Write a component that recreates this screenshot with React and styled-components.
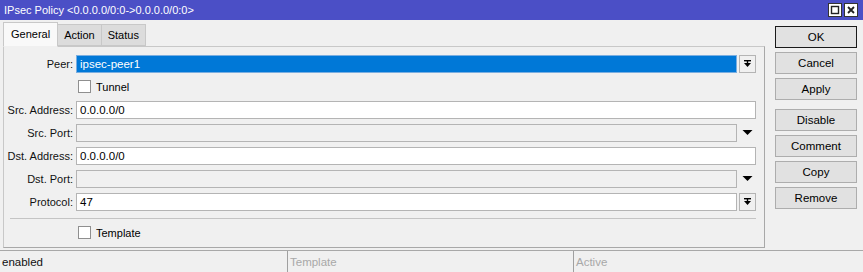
import * as React from 'react'
import styled, { createGlobalStyle } from 'styled-components'

const Global = createGlobalStyle`
    html, body {
        margin: 0;
        padding: 0;
        background: #f0f0f0;
    }
    body {
        font-family: "Liberation Sans", Arial, sans-serif;
        font-size: 11px;
        color: #000;
    }
`;

const Window = styled.div`
    width: 863px;
    height: 272px;
    display: flex;
    flex-direction: column;
    background: #f0f0f0;
    overflow: hidden;
`;
const TitleBar = styled.div`
    height: 20px;
    background: #4b4fc6;
    color: #fff;
    display: flex;
    align-items: center;
    padding: 0 4px;
    font-size: 11px;
`;
const TitleText = styled.div`
    flex: 1;
`;
const WinButtons = styled.div`
    display: flex;
    gap: 2px;
    margin-right: 1px;
`;
const WinButton = styled.div`
    width: 12px;
    height: 12px;
    background: #fff;
    border: 1px solid #333;
    display: flex;
    align-items: center;
    justify-content: center;
`;
const Main = styled.div`
    display: flex;
    height: 230px;
`;
const Left = styled.div`
    display: flex;
    flex-direction: column;
    padding: 2px 0 0 3px;
    width: 762px;
`;
const Tabs = styled.div`
    display: flex;
    align-items: flex-end;
    height: 24px;
    position: relative;
    z-index: 1;
`;
const Tab = styled.div`
    box-sizing: border-box;
    height: ${p => p.active ? '25px' : '22px'};
    padding: 0 ${p => p.active ? '7px' : '6px'};
    display: flex;
    align-items: center;
    background: ${p => p.active ? '#f9f9f9' : '#dcdcdc'};
    border: 1px solid #c8c8c8;
    border-bottom: ${p => p.active ? '1px solid #f0f0f0' : '1px solid #c8c8c8'};
    margin-left: ${p => p.active ? '0' : '-1px'};
    margin-bottom: ${p => p.active ? '-1px' : '0'};
    font-size: 11px;
`;
const Panel = styled.div`
    box-sizing: border-box;
    height: 202px;
    border: 1px solid #c8c8c8;
    border-right-color: #a8a8a8;
    border-bottom-color: #a8a8a8;
    padding: 8px 8px 0 0;
    display: flex;
    flex-direction: column;
`;
const Form = styled.div`
    display: grid;
    grid-template-columns: 69px 1fr;
    column-gap: 3px;
    row-gap: 5px;
    align-items: center;
`;
const Label = styled.div`
    text-align: right;
    white-space: nowrap;
    color: #111;
`;
const FieldRow = styled.div`
    display: flex;
    align-items: center;
    gap: 2px;
    height: 18px;
`;
const Field = styled.div`
    box-sizing: border-box;
    flex: 1;
    height: 18px;
    border: 1px solid ${p => p.selected ? '#7aaee0' : '#b4b4b4'};
    background: ${p => p.selected ? '#0078d7' : p.disabled ? '#f0f0f0' : '#fff'};
    color: ${p => p.selected ? '#fff' : '#000'};
    padding: 0 3px;
    display: flex;
    align-items: center;
    font-size: 11.5px;
`;
const DropButton = styled.div`
    box-sizing: border-box;
    width: 17px;
    height: 18px;
    border: 1px solid ${p => p.bare ? 'transparent' : '#b4b4b4'};
    background: #f0f0f0;
    display: flex;
    align-items: center;
    justify-content: center;
`;
const CheckRow = styled.div`
    grid-column: 2;
    display: flex;
    align-items: center;
    gap: 5px;
    height: 18px;
    padding-left: 2px;
`;
const Box = styled.div`
    box-sizing: border-box;
    width: 13px;
    height: 13px;
    background: #fff;
    border: 1px solid #8f8f8f;
`;
const Separator = styled.div`
    height: 1px;
    background: #c4c4c4;
    margin: 7px 0 0 6px;
`;
const TemplateRow = styled.div`
    display: flex;
    align-items: center;
    gap: 5px;
    height: 18px;
    margin: 5px 0 0 74px;
`;
const Buttons = styled.div`
    display: flex;
    flex-direction: column;
    padding: 6px 0 0 10px;
    width: 82px;
`;
const Button = styled.div`
    box-sizing: border-box;
    height: 22px;
    margin-bottom: ${p => p.gapAfter ? '9px' : '4px'};
    background: #e1e1e1;
    border: 1px solid ${p => p.primary ? '#1a1a1a' : '#adadad'};
    box-shadow: ${p => p.primary ? 'inset 0 0 0 1px #e1e1e1' : 'none'};
    display: flex;
    align-items: center;
    justify-content: center;
    font-size: 11.5px;
`;
const StatusBar = styled.div`
    display: flex;
    height: 21px;
    margin-top: 1px;
    border-top: 1px solid #a8a8a8;
`;
const StatusCell = styled.div`
    box-sizing: border-box;
    width: ${p => p.w}px;
    padding-left: 2px;
    display: flex;
    align-items: center;
    border-left: ${p => p.first ? 'none' : '1px solid #a0a0a0'};
    margin-left: ${p => p.first ? '0' : '2px'};
    color: ${p => p.muted ? '#a8a8a8' : '#111'};
    font-size: 11.5px;
`;

const BarArrow = () => (
    <svg width="9" height="9" viewBox="0 0 9 9">
        <rect x="1" y="1" width="7" height="1.4" fill="#000" />
        <rect x="3.8" y="2" width="1.4" height="2" fill="#000" />
        <polygon points="1,4 8,4 4.5,8" fill="#000" />
    </svg>
);

const DownArrow = () => (
    <svg width="11" height="7" viewBox="0 0 11 7">
        <polygon points="0.5,1 10.5,1 5.5,6" fill="#000" />
    </svg>
);

export default function App() {
    return (
        <Window>
            <Global />
            <TitleBar>
                <TitleText>IPsec Policy &lt;0.0.0.0/0:0-&gt;0.0.0.0/0:0&gt;</TitleText>
                <WinButtons>
                    <WinButton>
                        <svg width="10" height="10" viewBox="0 0 10 10">
                            <rect x="1.5" y="1.5" width="7" height="7" fill="none" stroke="#222" strokeWidth="1.4" />
                        </svg>
                    </WinButton>
                    <WinButton>
                        <svg width="10" height="10" viewBox="0 0 10 10">
                            <path d="M2 2 L8 8 M8 2 L2 8" stroke="#222" strokeWidth="1.8" />
                        </svg>
                    </WinButton>
                </WinButtons>
            </TitleBar>
            <Main>
                <Left>
                    <Tabs>
                        <Tab active>General</Tab>
                        <Tab>Action</Tab>
                        <Tab>Status</Tab>
                    </Tabs>
                    <Panel>
                        <Form>
                            <Label>Peer:</Label>
                            <FieldRow>
                                <Field selected>ipsec-peer1</Field>
                                <DropButton><BarArrow /></DropButton>
                            </FieldRow>

                            <CheckRow><Box />Tunnel</CheckRow>

                            <Label>Src. Address:</Label>
                            <FieldRow><Field>0.0.0.0/0</Field></FieldRow>

                            <Label>Src. Port:</Label>
                            <FieldRow>
                                <Field disabled />
                                <DropButton bare><DownArrow /></DropButton>
                            </FieldRow>

                            <Label>Dst. Address:</Label>
                            <FieldRow><Field>0.0.0.0/0</Field></FieldRow>

                            <Label>Dst. Port:</Label>
                            <FieldRow>
                                <Field disabled />
                                <DropButton bare><DownArrow /></DropButton>
                            </FieldRow>

                            <Label>Protocol:</Label>
                            <FieldRow>
                                <Field>47</Field>
                                <DropButton><BarArrow /></DropButton>
                            </FieldRow>
                        </Form>
                        <Separator />
                        <TemplateRow><Box />Template</TemplateRow>
                    </Panel>
                </Left>
                <Buttons>
                    <Button primary>OK</Button>
                    <Button>Cancel</Button>
                    <Button gapAfter>Apply</Button>
                    <Button>Disable</Button>
                    <Button>Comment</Button>
                    <Button>Copy</Button>
                    <Button>Remove</Button>
                </Buttons>
            </Main>
            <StatusBar>
                <StatusCell first w={285}>enabled</StatusCell>
                <StatusCell muted w={284}>Template</StatusCell>
                <StatusCell muted w={290}>Active</StatusCell>
            </StatusBar>
        </Window>
    )
}
